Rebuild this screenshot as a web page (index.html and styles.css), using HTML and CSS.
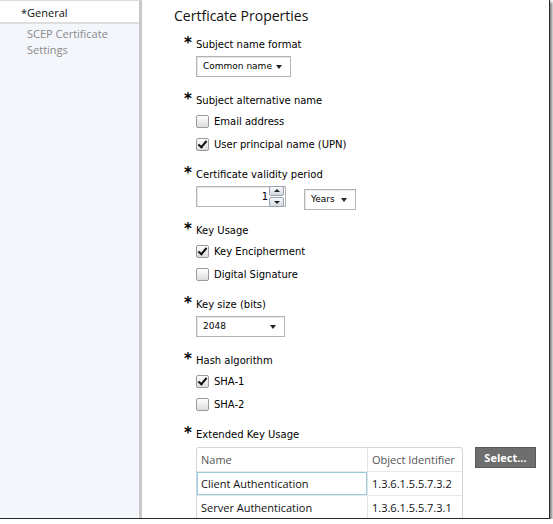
FILE: index.html
```html
<!DOCTYPE html>
<html>
  <head>
    <meta charset="utf-8">
    <title>Certificate Properties</title>
    <link rel="stylesheet" href="styles.css">
  </head>
  <body>
    <div class="window">

      <div class="nav">
        <div class="nav-item active">*General</div>
        <div class="nav-item">SCEP Certificate<br>Settings</div>
      </div>

      <div class="main">
        <h1>Certficate Properties</h1>

        <div class="section">
          <div class="label"><span class="req">*</span>Subject name format</div>
          <div class="dropdown wide">Common name <span class="arrow"></span></div>
        </div>

        <div class="section">
          <div class="label"><span class="req">*</span>Subject alternative name</div>
          <div class="check"><span class="box"></span>Email address</div>
          <div class="check"><span class="box checked"></span>User principal name (UPN)</div>
        </div>

        <div class="section">
          <div class="label"><span class="req">*</span>Certificate validity period</div>
          <div class="inline">
            <div class="spin">
              <span class="value">1</span>
              <span class="spin-btns">
                <span class="spin-btn up"></span>
                <span class="spin-btn down"></span>
              </span>
            </div>
            <div class="dropdown small">Years <span class="arrow"></span></div>
          </div>
        </div>

        <div class="section">
          <div class="label"><span class="req">*</span>Key Usage</div>
          <div class="check"><span class="box checked"></span>Key Encipherment</div>
          <div class="check"><span class="box"></span>Digital Signature</div>
        </div>

        <div class="section">
          <div class="label"><span class="req">*</span>Key size (bits)</div>
          <div class="dropdown size">2048 <span class="arrow"></span></div>
        </div>

        <div class="section">
          <div class="label"><span class="req">*</span>Hash algorithm</div>
          <div class="check"><span class="box checked"></span>SHA-1</div>
          <div class="check"><span class="box"></span>SHA-2</div>
        </div>

        <div class="section">
          <div class="label"><span class="req">*</span>Extended Key Usage</div>
          <div class="inline top">
            <table class="grid">
              <tr>
                <th class="col-name">Name</th>
                <th>Object Identifier</th>
              </tr>
              <tr>
                <td class="col-name focus">Client Authentication</td>
                <td>1.3.6.1.5.5.7.3.2</td>
              </tr>
              <tr>
                <td class="col-name">Server Authentication</td>
                <td>1.3.6.1.5.5.7.3.1</td>
              </tr>
              <tr>
                <td class="col-name">&nbsp;</td>
                <td>&nbsp;</td>
              </tr>
            </table>
            <button class="select-btn">Select...</button>
          </div>
        </div>
      </div>

    </div>
  </body>
</html>
```

FILE: styles.css
```css
html {
  background: #ffffff;
}

body {
  margin: 0;
  font: 10px/1.4 "DejaVu Sans", Verdana, sans-serif;
  color: #000000;
}

.window {
  display: flex;
  width: 549px;
  height: 518px;
  overflow: hidden;
  background: #ffffff;
  border-right: 1px solid #2a2a2a;
  border-bottom: 1px solid #2a2a2a;
  box-shadow: 2px 2px 3px rgba(0, 0, 0, 0.55);
}

/* left navigation */

.nav {
  width: 139px;
  flex: none;
  background: #f3f6fb;
  border-right: 3px solid #c9c9c9;
  border-top: 1px solid #dcdcdc;
  font: 11px/16px "Open Sans", "Noto Sans", sans-serif;
}

.nav-item {
  padding: 0 0 0 27px;
  color: #8a8a8a;
}

.nav-item.active {
  background: #ffffff;
  color: #111111;
  padding: 4px 0 1px 21px;
  border-bottom: 2px solid #dedede;
  margin-bottom: 2px;
}

/* main form */

.main {
  flex: 1;
  padding: 0 0 0 32px;
}

h1 {
  font: 400 14px/18px "Open Sans", "Noto Sans", sans-serif;
  margin: 7px 0 13px;
  color: #111111;
}

.section {
  padding: 0 0 12px 22px;
}

.label {
  position: relative;
  line-height: 14px;
  margin-bottom: 4px;
}

.label + .check {
  margin-top: -2px;
}

.req {
  position: absolute;
  left: -12px;
  top: -2px;
  font: bold 15px/15px "DejaVu Sans", sans-serif;
}

.inline {
  display: flex;
  align-items: center;
  gap: 18px;
}

.inline.top {
  align-items: flex-start;
  gap: 12px;
}

/* dropdowns */

.dropdown {
  position: relative;
  box-sizing: border-box;
  height: 21px;
  line-height: 19px;
  padding-left: 6px;
  font-size: 9px;
  border: 1px solid #b3b3b3;
  box-shadow: inset 1px 1px 1px #e6e6e6;
  background: #ffffff;
  margin-bottom: 5px;
}

.dropdown.wide {
  width: 95px;
}

.dropdown.size {
  width: 89px;
  margin-top: 1px;
}

.dropdown.small {
  width: 52px;
  margin-bottom: 0;
}

.arrow {
  position: absolute;
  right: 8px;
  top: 8px;
  border-left: 3px solid transparent;
  border-right: 3px solid transparent;
  border-top: 4px solid #222222;
}

/* spinner */

.spin {
  display: flex;
  align-items: center;
  box-sizing: border-box;
  width: 90px;
  height: 21px;
  border: 1px solid #b3b3b3;
  box-shadow: inset 1px 1px 1px #e6e6e6;
  margin-bottom: 5px;
}

.value {
  flex: 1;
  text-align: right;
  padding-right: 1px;
}

.spin-btns {
  display: flex;
  flex-direction: column;
  gap: 1px;
  margin-right: 1px;
}

.spin-btn {
  position: relative;
  width: 13px;
  height: 8px;
  border: 1px solid #9aa3ad;
  border-radius: 2px;
  background: linear-gradient(#f6f7f9, #d5dae0);
}

.spin-btn::after {
  content: "";
  position: absolute;
  left: 4px;
  border-left: 3px solid transparent;
  border-right: 3px solid transparent;
}

.spin-btn.up::after {
  top: 2px;
  border-bottom: 3px solid #222222;
}

.spin-btn.down::after {
  top: 3px;
  border-top: 3px solid #222222;
}

/* checkboxes */

.check {
  display: flex;
  align-items: center;
  height: 23px;
}

.box {
  position: relative;
  box-sizing: border-box;
  width: 13px;
  height: 13px;
  margin-right: 5px;
  border: 1px solid #9a9a9a;
  border-radius: 2px;
  background: linear-gradient(#ffffff, #dcdcdc);
}

.box.checked::after {
  content: "";
  position: absolute;
  left: 3px;
  top: 0;
  width: 3px;
  height: 7px;
  border: solid #111111;
  border-width: 0 2px 2px 0;
  transform: rotate(40deg);
}

/* grid */

.grid {
  width: 267px;
  margin-top: 1px;
  border: 1px solid #cfd6dd;
  border-bottom: 0;
  border-radius: 3px 3px 0 0;
  border-collapse: separate;
  border-spacing: 0;
  font: 11px "Open Sans", "Noto Sans", sans-serif;
  flex: none;
}

.grid th,
.grid td {
  height: 23px;
  padding: 0 0 0 4px;
  text-align: left;
  border-bottom: 1px solid #e8e8e8;
  white-space: nowrap;
}

.grid th {
  font-weight: 400;
  color: #555555;
}

.grid td {
  color: #111111;
}

.grid .col-name {
  width: 166px;
  border-right: 1px solid #e3e3e3;
}

.grid td.focus {
  box-shadow: inset 0 0 0 1px #9ccbe0;
}

.select-btn {
  width: 61px;
  height: 21px;
  margin-top: 1px;
  padding: 0;
  border: 1px solid #5a5a5a;
  background: #6e6e6e;
  color: #ffffff;
  font: bold 11px "Open Sans", "Noto Sans", sans-serif;
}
```
